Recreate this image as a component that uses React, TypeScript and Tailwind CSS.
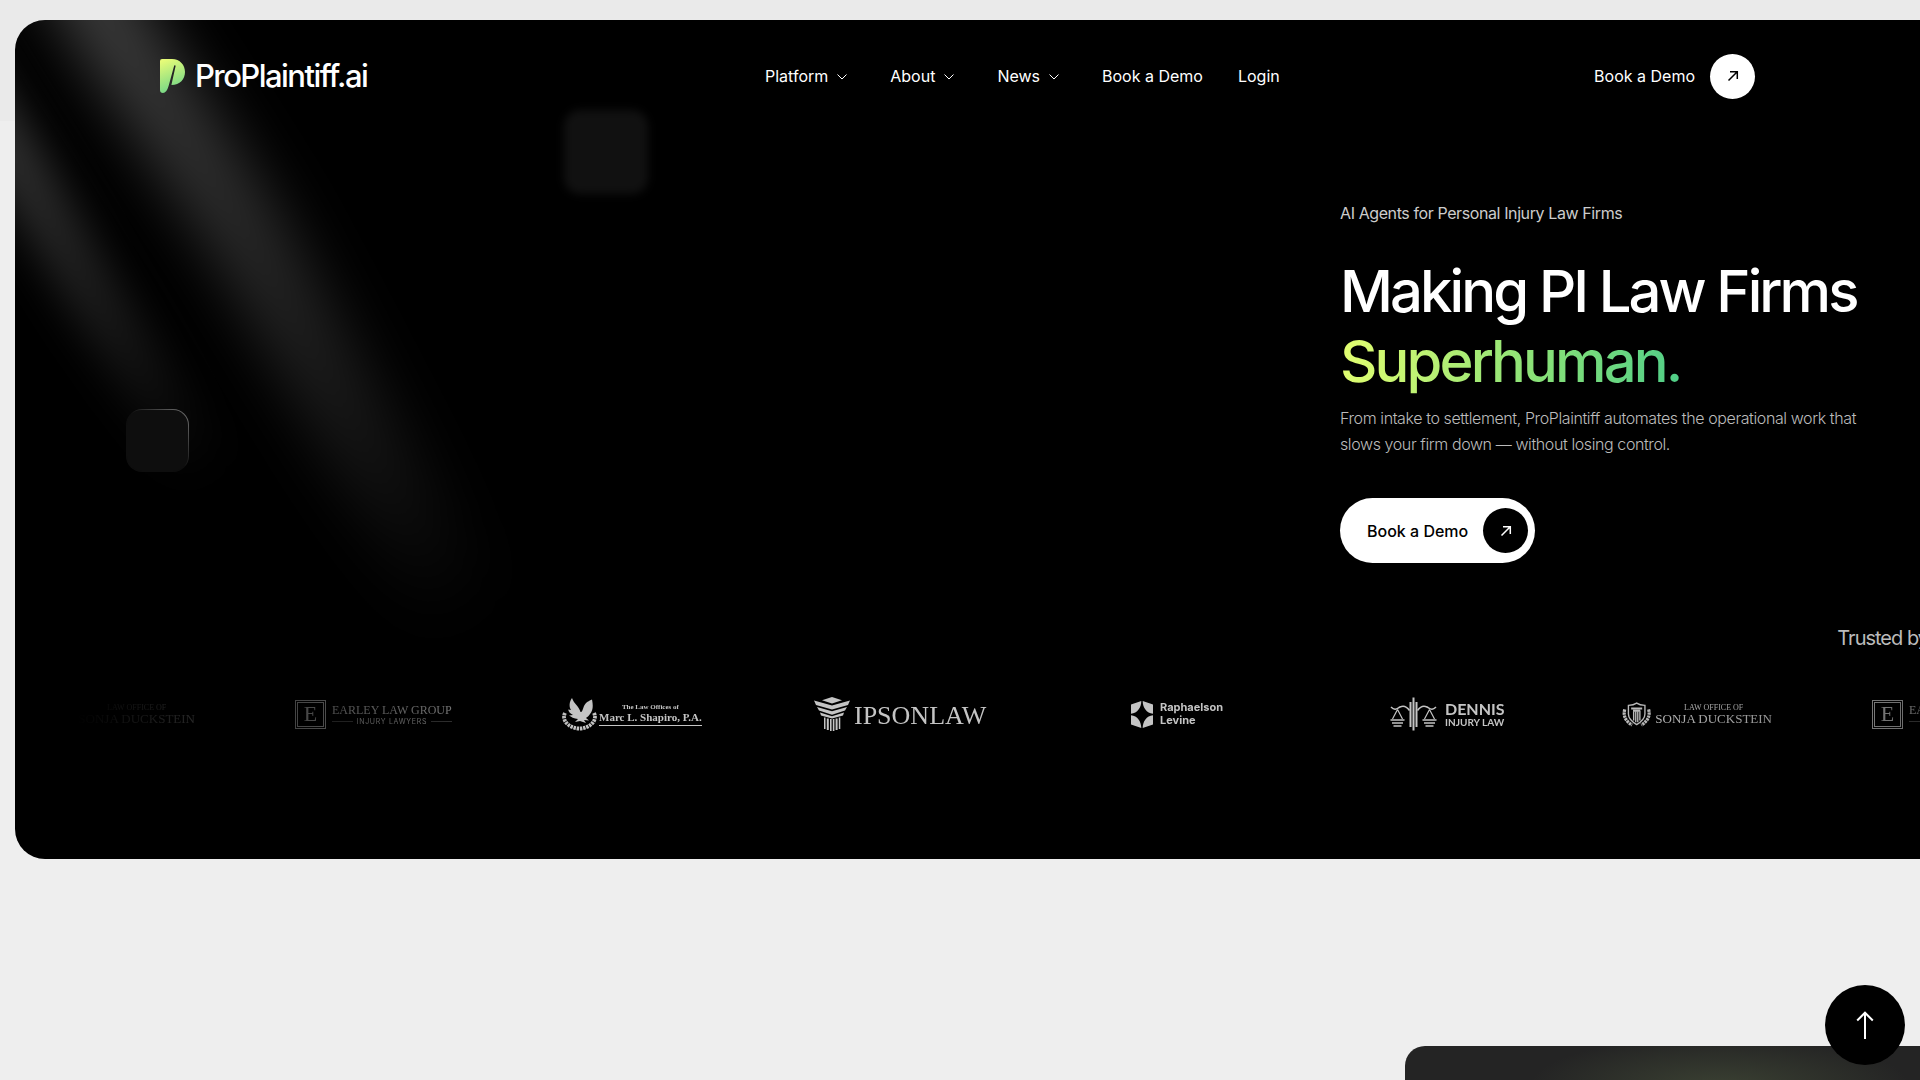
import React from "react";

function ArrowUpRight({ className }: { className: string }) {
  return (
    <svg className={className} viewBox="0 0 12 12" fill="none" stroke="currentColor" strokeWidth="1.5" aria-hidden="true">
      <path d="M1.5 10.5 10 2M3 1.7h7.3V9" />
    </svg>
  );
}

function Chevron() {
  return (
    <svg className="h-4 w-[27px]" viewBox="0 0 27 16" fill="none" stroke="currentColor" strokeWidth="1" aria-hidden="true">
      <path d="m9.500 6.500 4.500 4.500 4.500-4.500" />
    </svg>
  );
}

function BrandMark() {
  return (
    <svg className="h-[34px] w-[25px]" viewBox="0 0 25 34" aria-hidden="true">
      <defs>
        <linearGradient id="mark" x1="0.3" y1="0" x2="0.6" y2="1">
          <stop offset="0" stopColor="#e6fb78" />
          <stop offset="1" stopColor="#6bd488" />
        </linearGradient>
      </defs>
      <path
        fill="url(#mark)"
        d="M0 2Q0 0 2 0H12C20 0 25 6 25 13C25 20 20 26 11.4 26L15.6 7Q15.4 5.6 14.2 6.6L8.6 27Q6.6 34 3 34Q0 34 0 31Z"
      />
    </svg>
  );
}

function LightBeams() {
  return (
    <svg className="pointer-events-none absolute left-0 top-0 h-[760px] w-[760px]" viewBox="0 0 760 760" fill="none" aria-hidden="true">
      <defs>
        <filter id="soft" filterUnits="userSpaceOnUse" x="-200" y="-200" width="1100" height="1100">
          <feGaussianBlur stdDeviation="29" />
        </filter>
        <filter id="softer" filterUnits="userSpaceOnUse" x="-200" y="-200" width="1100" height="1100">
          <feGaussianBlur stdDeviation="21" />
        </filter>
        <linearGradient id="beamA" gradientUnits="userSpaceOnUse" x1="103" y1="17" x2="450" y2="600">
          <stop offset="0" stopColor="#fff" stopOpacity="0.23" />
          <stop offset="0.35" stopColor="#fff" stopOpacity="0.16" />
          <stop offset="0.7" stopColor="#fff" stopOpacity="0.08" />
          <stop offset="1" stopColor="#fff" stopOpacity="0" />
        </linearGradient>
        <linearGradient id="beamB" gradientUnits="userSpaceOnUse" x1="0" y1="130" x2="190" y2="460">
          <stop offset="0" stopColor="#fff" stopOpacity="0.19" />
          <stop offset="0.5" stopColor="#fff" stopOpacity="0.1" />
          <stop offset="1" stopColor="#fff" stopOpacity="0" />
        </linearGradient>
      </defs>
      <path d="M20-120 103 17 230 213 345 417 465 620" stroke="url(#beamA)" strokeWidth="80" filter="url(#soft)" />
      <path d="M-60 40 0 140 75 270 195 460" stroke="url(#beamB)" strokeWidth="54" filter="url(#softer)" />
    </svg>
  );
}

function Sonja() {
  return (
    <div className="flex w-[150px] items-center gap-1">
      <svg className="h-[26px] w-8" viewBox="0 0 32 26" fill="none" stroke="currentColor" aria-hidden="true">
        <path d="M16 1.2C13.5 3 10 3.6 7 3.6V13c0 5 4 8.500 9 11.500 5-3 9-6.500 9-11.500V3.600C22 3.600 18.500 3 16 1.200Z" strokeWidth="1.500" />
        <path d="M10 7h12M12 9.500h8" strokeWidth="2" />
        <path d="M12.700 10v10M15 10v12M17.200 10v12M19.500 10v10" strokeWidth="1.500" />
        <path d="M3 8C1 15 4 21 11 25M29 8C31 15 28 21 21 25" strokeWidth="3.500" strokeDasharray="2.600 0.700" />
      </svg>
      <div className="text-center font-['Liberation_Serif',serif]">
        <div className="text-[8px] leading-[10px] whitespace-nowrap">LAW OFFICE OF</div>
        <div className="text-[13px] leading-[12px] whitespace-nowrap">SONJA DUCKSTEIN</div>
      </div>
    </div>
  );
}

function Earley() {
  return (
    <div className="flex w-[167px] items-center gap-1.5">
      <div className="flex h-[29px] w-[31px] shrink-0 items-center justify-center border-[3px] border-double border-current font-['Liberation_Serif',serif] text-[22px] leading-none">
        E
      </div>
      <div className="font-['Liberation_Serif',serif] whitespace-nowrap">
        <div className="text-[12px] leading-[14px]">EARLEY LAW GROUP</div>
        <div className="flex items-center gap-1 font-['Inter',sans-serif] text-[7px] leading-[9px] tracking-widest">
          <span className="h-px flex-1 bg-current opacity-40" />
          INJURY LAWYERS
          <span className="h-px flex-1 bg-current opacity-40" />
        </div>
      </div>
    </div>
  );
}

function Shapiro() {
  return (
    <div className="flex w-[152px] items-center gap-0.5">
      <svg className="h-[34px] w-[35px] shrink-0" viewBox="0 0 35 34" fill="currentColor" aria-hidden="true">
        <path d="M10 1C12 7 17 9 18.500 15 20 15.500 20.500 13 22 9 24 5 27 4 30 2.500 31 8 31.500 13 28 17 27 19 25 20 24 21L27 23.500 22 23 24 26 18 24 13 25 16 22C12 21.500 9 20 7 18.500L11 18C8 16.500 6.500 14.500 6.200 12.500L9 13C7 10 7 5 10 1Z" />
        <path
          d="M3 16C-1 24 8 31.500 17.500 31.500S36 24 32 16"
          fill="none"
          stroke="currentColor"
          strokeWidth="3.800"
          strokeDasharray="2.400 0.800"
        />
      </svg>
      <div className="shrink-0 whitespace-nowrap border-b border-current pb-0.5 text-center font-['Liberation_Serif',serif] font-bold">
        <div className="text-[7px] leading-[8px]">The Law Offices of</div>
        <div className="text-[11px] leading-[12px]">Marc L. Shapiro, P.A.</div>
      </div>
    </div>
  );
}

function Ipson() {
  return (
    <div className="flex w-[217px] items-center gap-1">
      <svg className="h-[34px] w-9 shrink-0" viewBox="0 0 36 34" fill="currentColor" aria-hidden="true">
        <path d="M8 3.200 18 0l10 3.200L18 6.500Z" />
        <path d="M0 3.500 18 8.500 36 3.500 34 8 18 12.500 2 8Z" />
        <path d="M3 10 18 14.200 33 10 31 13.500 18 17.800 5 13.500Z" />
        <path d="M6 15.500 18 19.200 30 15.500 29 18.500 18 21.500 7 18.500Z" />
        <path d="M10 20.500h1.500V32H10ZM12.800 21.500h2V33h-2ZM16 22h1.600v12H16ZM18.800 22h1.600v12h-1.600ZM21.600 21.500h2V33h-2ZM24.800 20.500h1.500V32h-1.500Z" />
      </svg>
      <span className="pt-1 font-['Liberation_Serif',serif] text-[26px] leading-8">IPSONLAW</span>
    </div>
  );
}

function Raphaelson() {
  return (
    <div className="flex w-[159px] items-center gap-[7px]">
      <svg className="h-[27px] w-[22px]" viewBox="0 0 22 27" fill="currentColor" aria-hidden="true">
        <path d="M0 3.500 10.300 0C10.300 6.500 6.500 12.200 0 12.700ZM22 3.500 11.700 0C11.700 6.500 15.500 12.200 22 12.700ZM0 23.500 10.300 27C10.300 20.500 6.500 14.700 0 14.200ZM22 23.500 11.700 27C11.700 20.500 15.500 14.700 22 14.200Z" />
      </svg>
      <div className="font-['Inter',sans-serif] text-[11px] font-bold leading-[13px]">
        Raphaelson
        <br />
        Levine
      </div>
    </div>
  );
}

function Dennis() {
  return (
    <div className="flex w-[132px] items-center gap-2">
      <svg className="h-[34px] w-[47px]" viewBox="0 0 47 34" fill="none" stroke="currentColor" aria-hidden="true">
        <path d="M20.500 5v25M26.500 5v25" strokeWidth="2" />
        <path d="M23.500 0.500v33" strokeWidth="2" />
        <path d="M1 10C5 14 7 11.500 10 10S16 8.500 19.500 13.500M46 10C42 14 40 11.500 37 10S31 8.500 27.500 13.500" strokeWidth="1.500" />
        <path d="M7.500 12.500 2.500 22M7.500 12.500 12.500 22M39.500 12.500 34.500 22M39.500 12.500 44.500 22" strokeWidth="1.200" />
        <path d="M0.500 23h14M2 26h11M3.500 29h8M32.500 23h14M34 26h11M35.500 29h8" strokeWidth="1.500" />
      </svg>
      <div className="font-['Lato',sans-serif] font-bold whitespace-nowrap">
        <div className="text-[16px] leading-[16px]">DENNIS</div>
        <div className="text-[10px] leading-[10px]">INJURY LAW</div>
      </div>
    </div>
  );
}

const menu = [
  { label: "Platform", expandable: true },
  { label: "About", expandable: true },
  { label: "News", expandable: true },
  { label: "Book a Demo", expandable: false },
  { label: "Login", expandable: false },
];

export default function App() {
  return (
    <div className="flex min-h-screen flex-col overflow-hidden bg-[#eee] bg-[linear-gradient(#eaeaea,#eaeaea)] bg-[length:100%_121px] bg-no-repeat pt-5 font-['Inter',sans-serif]">
      <main className="relative ml-[15px] overflow-hidden rounded-l-[30px] bg-black text-white">
        <LightBeams />
        <div className="absolute left-[549px] top-[90px] size-[84px] rounded-2xl bg-[#111] blur-[4px]" />
        <div className="absolute left-[111px] top-[389px] size-[63px] rounded-2xl bg-[linear-gradient(to_bottom_left,#777,#0e0e0e_50%)] p-px">
          <div className="size-full rounded-[15px] bg-[#0e0e0e]" />
        </div>

        <header className="relative grid h-28 grid-cols-[605px_1fr_auto] items-center pl-[145px] pr-[165px]">
          <a href="#home" className="flex items-center gap-2.5">
            <BrandMark />
            <span className="text-[31px] font-medium leading-9 tracking-tighter">ProPlaintiff.ai</span>
          </a>
          <nav className="flex items-center gap-[35px] text-[16px] leading-6">
            {menu.map((item) =>
              item.expandable ? (
                <button key={item.label} type="button" className="flex items-center">
                  {item.label}
                  <Chevron />
                </button>
              ) : (
                <a key={item.label} href="#menu" className="whitespace-nowrap">
                  {item.label}
                </a>
              ),
            )}
          </nav>
          <a href="#demo" className="flex items-center gap-[15px] text-[16px] leading-6">
            Book a Demo
            <span className="flex size-[45px] items-center justify-center rounded-full bg-white text-black">
              <ArrowUpRight className="size-3" />
            </span>
          </a>
        </header>

        <section className="relative ml-auto w-[580px] pt-[69px]">
          <p className="text-[16px] leading-6 tracking-tight text-[#ccc]">AI Agents for Personal Injury Law Firms</p>
          <h1 className="mt-[31px] whitespace-nowrap text-[58px] font-medium leading-[70px] tracking-tighter">
            Making PI Law Firms
            <br />
            <span className="inline-block bg-[linear-gradient(100deg,#e5ff70,#86e078_60%,#4fce88)] bg-clip-text text-transparent">
              Superhuman.
            </span>
          </h1>
          <p className="mt-[9px] max-w-[530px] text-[16px] font-light leading-[26px] tracking-tight text-[#bbb]">
            From intake to settlement, ProPlaintiff automates the operational work that slows your firm down — without losing control.
          </p>
          <a href="#demo" className="mt-[41px] inline-flex h-[65px] items-center gap-[15px] rounded-full bg-white pl-[27px] pr-[7px] text-[16px] font-medium leading-6 text-black">
            Book a Demo
            <span className="flex size-[45px] items-center justify-center rounded-full bg-black text-white">
              <ArrowUpRight className="size-3" />
            </span>
          </a>
        </section>

        <p className="relative mt-[60px] flex justify-end text-[20px] leading-[30px] text-[#bbb]">
          <span className="-mr-2 whitespace-nowrap tracking-tighter">Trusted by</span>
        </p>

        <div className="relative mt-11 mb-[128px] flex h-[34px] items-center gap-[100px] overflow-hidden pl-[30px] text-[#c4c4c4] [mask-image:linear-gradient(to_right,transparent_60px,#0004_220px,#0008_420px,black_560px,black_1580px,#0008_1905px)] *:shrink-0">
          <Sonja />
          <Earley />
          <Shapiro />
          <Ipson />
          <Raphaelson />
          <Dennis />
          <Sonja />
          <Earley />
        </div>
      </main>

      <section className="ml-auto mt-[187px] w-[515px] flex-1 rounded-tl-[20px] bg-[#242424] bg-[radial-gradient(ellipse_190px_50px_at_315px_40px,#3a4032,transparent)]" />

      <button
        type="button"
        aria-label="Back to top"
        className="fixed bottom-[15px] right-[15px] flex size-20 items-center justify-center rounded-full bg-black text-white"
      >
        <svg className="h-7 w-[18px]" viewBox="0 0 18 28" fill="none" stroke="currentColor" strokeWidth="2" aria-hidden="true">
          <path d="M9 28V1.500M1.200 9.500 9 1.700l7.800 7.800" />
        </svg>
      </button>
    </div>
  );
}
